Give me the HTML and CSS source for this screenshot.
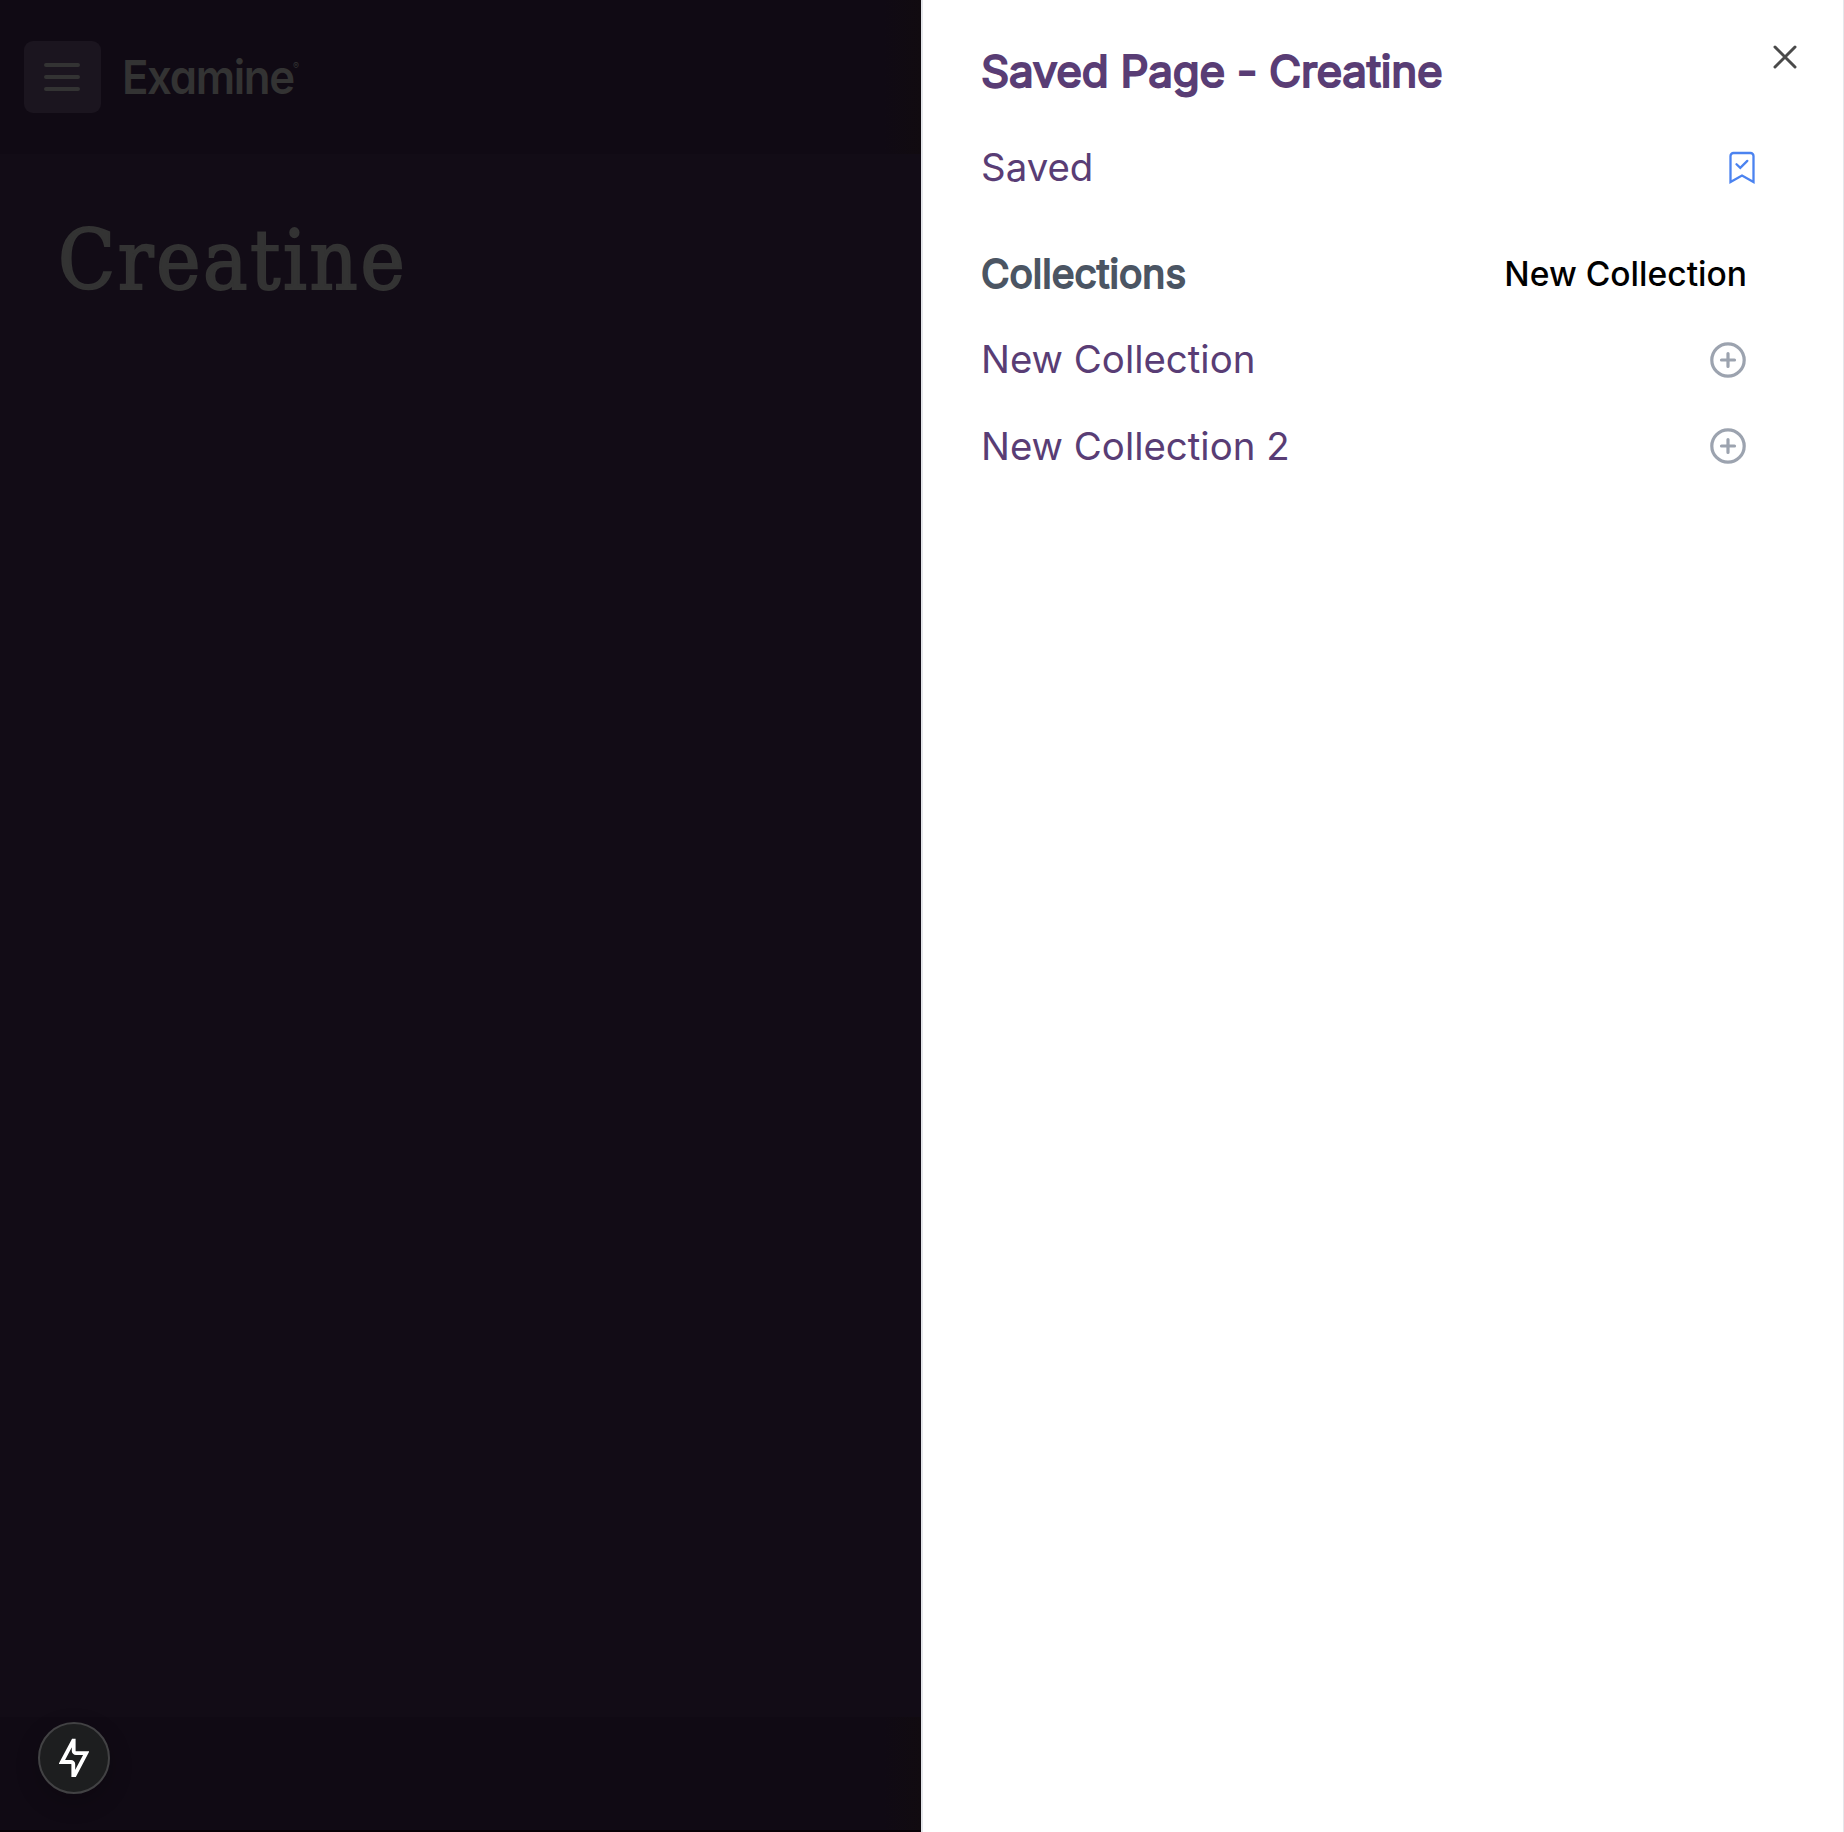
FILE: index.html
```html
<!DOCTYPE html>
<html lang="en">
<head>
<meta charset="utf-8">
<title>Saved Page - Creatine</title>
<link rel="stylesheet" href="styles.css">
</head>
<body>
<div class="app">
  <div class="page">
    <header class="topbar">
      <div class="menu">
        <svg width="37" height="30" viewBox="0 0 37 30"><path d="M2 3h32M2 15h32M2 27h32" fill="none" stroke="#333" stroke-width="4" stroke-linecap="round"/></svg>
      </div>
      <div class="brand"><span class="name">Examine</span><span class="reg">®</span></div>
    </header>
    <main class="content"><h1 class="title">Creatine</h1></main>
    <footer class="bottom">
      <div class="bolt">
        <svg width="30" height="40" viewBox="0 0 30 40"><path d="M14.200 2.600L2.800 24H12a2.300 2.300 0 0 1 2.300 2.300V37H15.700L27.200 15.200H17a2.300 2.300 0 0 1-2.300-2.300V2.600z" fill="none" stroke="#fff" stroke-width="3.800"/></svg>
      </div>
    </footer>
  </div>
  <aside class="drawer">
    <div class="head">
      <h2 class="heading">Saved Page - Creatine</h2>
      <svg class="close" width="24" height="24" viewBox="0 0 24 24"><path d="M2 2l20 20M22 2L2 22" fill="none" stroke="#4a4a4a" stroke-width="3" stroke-linecap="round"/></svg>
    </div>
    <div class="row saved">
      <span class="label">Saved</span>
      <svg width="26" height="33" viewBox="0 0 26 33"><path d="M2 31V5a3 3 0 0 1 3-3h17a3 3 0 0 1 3 3v26l-11.500-6.500z" transform="translate(-.5 0)" fill="none" stroke="#4b83f0" stroke-width="2.300"/><path d="M7.500 13.200l3.800 3.700 7-7" fill="none" stroke="#4b83f0" stroke-width="2.300" stroke-linecap="round"/></svg>
    </div>
    <div class="row section">
      <h3 class="subheading">Collections</h3>
      <span class="create">New Collection</span>
    </div>
    <div class="row item">
      <span class="label">New Collection</span>
      <svg width="36" height="37" viewBox="0 0 36 37"><circle cx="18" cy="19" r="16.200" fill="none" stroke="#9ca3af" stroke-width="3.200"/><path d="M18 12.500v13M11.500 19h13" fill="none" stroke="#9ca3af" stroke-width="3.200" stroke-linecap="round"/></svg>
    </div>
    <div class="row item">
      <span class="label">New Collection 2</span>
      <svg width="36" height="36" viewBox="0 0 36 36"><circle cx="18" cy="18" r="16.200" fill="none" stroke="#9ca3af" stroke-width="3.200"/><path d="M18 11.500v13M11.500 18h13" fill="none" stroke="#9ca3af" stroke-width="3.200" stroke-linecap="round"/></svg>
    </div>
  </aside>
</div>
</body>
</html>
```
FILE: styles.css
```css
* { box-sizing: border-box; }
body { margin: 0; font-family: Inter, "Liberation Sans", sans-serif; }
h1, h2, h3 { margin: 0; font-weight: 400; }
svg { display: block; flex: none; }
.app { display: grid; grid-template-columns: 921px 923px; height: 1832px; overflow: hidden; }
.page { display: flex; flex-direction: column; background: #120c16; color: #333; }
.topbar { display: flex; height: 154px; padding: 41px 0 0 24px; background: linear-gradient(90deg, #100a14 96%, #110b10); }
.menu { display: flex; align-items: center; justify-content: center; width: 77px; height: 72px; border-radius: 9px; background: #1b151f; }
.brand { display: flex; margin-left: 21px; }
.name { width: 171px; font-size: 47px; line-height: 72px; font-weight: 600; font-feature-settings: "cv11"; letter-spacing: -1.5px; transform: scaleX(.932); transform-origin: left; }
.reg { font-size: 9px; line-height: 50px; }
.content { flex: 1; padding: 52px 0 0 58px; }
.title { font-family: "DejaVu Serif Condensed", "DejaVu Serif", serif; font-stretch: condensed; font-size: 83px; line-height: 110px; letter-spacing: 2.700px; -webkit-text-stroke: 2px #333; }
.bottom { height: 115px; padding: 5px 0 0 38px; background: linear-gradient(90deg, #100a14 96%, #110b10); border-bottom: 2px solid #080006; }
.bolt { display: flex; align-items: center; justify-content: center; width: 72px; height: 72px; border-radius: 50%; border: 2px solid #424244; background: #1d1e1f; box-shadow: 0 8px 24px rgba(0,0,0,.2); }
.drawer { background: #fff; border-left: 2px solid #e5e7eb; border-right: 1px solid #e5e7eb; padding: 41px 0 0 58px; }
.head { display: flex; justify-content: space-between; height: 83px; padding-right: 46px; }
.heading { color: #593d75; font-size: 44px; line-height: 60px; letter-spacing: -.27px; -webkit-text-stroke: 2px #593d75; }
.close { margin-top: 4px; }
.row { display: flex; justify-content: space-between; align-items: center; padding-right: 97px; }
.saved { height: 86px; padding-right: 88px; }
.section { height: 106px; padding-top: 21px; }
.item { height: 86.600px; }
.label { color: #593d75; font-size: 38.400px; }
.subheading { color: #4b5563; font-size: 39px; line-height: 48px; -webkit-text-stroke: 1.800px #4b5563; }
.create { color: #000; font-size: 33.600px; font-weight: 500; margin-right: -1px; }
```
